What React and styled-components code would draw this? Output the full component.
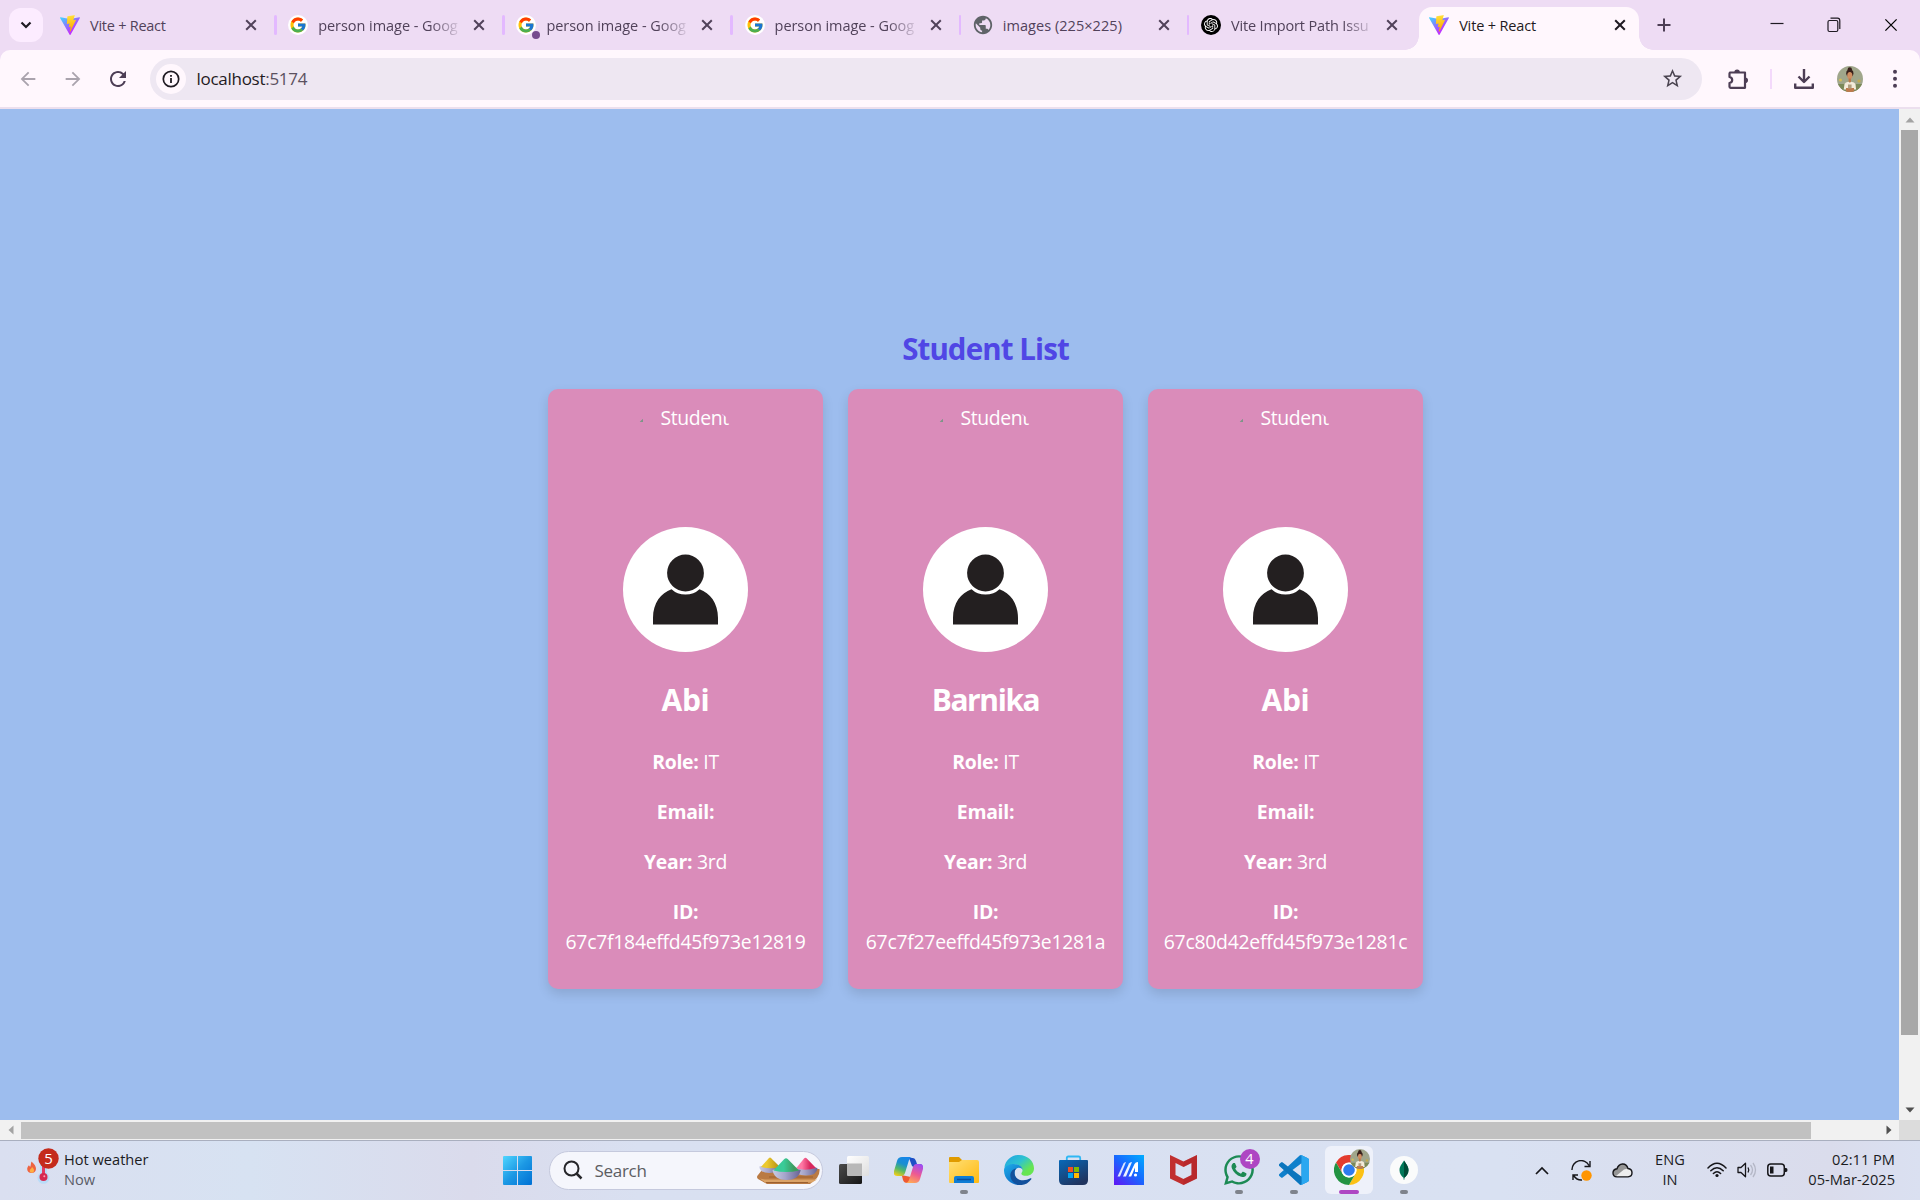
import React from 'react';
import styled, { createGlobalStyle, css } from 'styled-components';
import { FcGoogle } from 'react-icons/fc';
import { SiOpenai } from 'react-icons/si';
import { FaWhatsapp } from 'react-icons/fa';
import {
  MdArrowBack, MdArrowForward, MdRefresh, MdStarBorder, MdPublic,
} from 'react-icons/md';

const GlobalStyle = createGlobalStyle`
  * { box-sizing: border-box; }
  html, body { margin: 0; padding: 0; overflow: hidden; }
  body { font-family: "Open Sans", "Noto Sans", sans-serif; }
  svg { display: block; flex: none; }
`;

const Screen = styled.div`
  display: flex;
  flex-direction: column;
  width: 1920px;
  height: 1200px;
  overflow: hidden;
`;

/* ---------- Tab strip ---------- */

const TabStrip = styled.header`
  display: flex;
  height: 50px;
  background: #eedcf4;
`;

const TabSearch = styled.button`
  display: flex;
  align-items: center;
  justify-content: center;
  width: 34px;
  height: 34px;
  margin: 8px 7.5px 0 8.5px;
  padding: 0;
  border: 0;
  border-radius: 12px;
  background: #fcecff;
`;

const TabBox = styled.div`
  display: flex;
  align-items: center;
  flex: none;
  width: ${(p) => (p.$active ? 220 : 228.2)}px;
  height: ${(p) => (p.$active ? 43 : 50)}px;
  padding-left: 10px;
  color: ${(p) => (p.$active ? '#1f1a22' : '#51425a')};
  ${(p) => p.$active && css`
    position: relative;
    align-self: flex-end;
    padding-bottom: 7px;
    border-radius: 13px 13px 0 0;
    background: #fff7fd;
    &::before, &::after {
      content: '';
      position: absolute;
      bottom: 0;
      width: 14px;
      height: 14px;
    }
    &::before {
      right: 100%;
      background: radial-gradient(circle at 0 0, transparent 13.5px, #fff7fd 14px);
    }
    &::after {
      left: 100%;
      background: radial-gradient(circle at 100% 0, transparent 13.5px, #fff7fd 14px);
    }
  `}
`;

const Favicon = styled.span`
  position: relative;
  display: flex;
  align-items: center;
  justify-content: center;
  flex: none;
  width: 20px;
  height: 20px;
  margin-right: 10px;
  border-radius: 50%;
  background: ${(p) => p.$bg || 'transparent'};
`;

const ActivityDot = styled.i`
  position: absolute;
  right: -4px;
  bottom: -4px;
  width: 8px;
  height: 8px;
  border-radius: 50%;
  background: #764b8e;
`;

const TabTitle = styled.span`
  flex: none;
  width: 143px;
  padding-top: 1.5px;
  white-space: nowrap;
  font-size: 14.5px;
  line-height: 22px;
  letter-spacing: ${(p) => p.$spacing}px;
  ${(p) => p.$fade && css`
    mask-image: linear-gradient(90deg, #000 112px, transparent 145px);
  `}
`;

const TabClose = styled.span`
  display: flex;
  margin-left: 12px;
`;

const TabDivider = styled.i`
  width: 2.5px;
  height: 20px;
  margin-left: 17px;
  margin-top: -1px;
  border-radius: 2px;
  background: #e3b9ff;
`;

const NewTab = styled.span`
  display: flex;
  align-items: center;
  margin-left: 18px;
  height: 50px;
`;

const WindowControls = styled.div`
  display: flex;
  align-items: center;
  gap: 43px;
  height: 50px;
  margin-left: auto;
  padding-right: 22px;
`;

/* ---------- Toolbar ---------- */

const ToolbarBack = styled.div`
  height: 59px;
  background: #eedcf4;
`;

const Toolbar = styled.nav`
  display: flex;
  align-items: center;
  height: 59px;
  padding: 0 0 0 16px;
  border-bottom: 2px solid #ecdfee;
  border-radius: 10px 10px 0 0;
  background: #fff7fd;
  color: #4d3e55;
`;

const NavButton = styled.span`
  display: flex;
  justify-content: center;
  width: 24px;
  margin-right: ${(p) => p.$gap}px;
  color: ${(p) => (p.$muted ? '#aaa3ad' : '#4d3e55')};
`;

const AddressBar = styled.div`
  display: flex;
  align-items: center;
  flex: none;
  width: 1552px;
  height: 42px;
  padding: 0 18px 0 6px;
  border-radius: 21px;
  background: #eee7f2;
`;

const SiteInfo = styled.span`
  display: flex;
  align-items: center;
  justify-content: center;
  width: 30px;
  height: 30px;
  margin-right: 10.5px;
  border-radius: 50%;
  background: #fff7fd;
`;

const Url = styled.span`
  flex: 1;
  padding-top: 1px;
  font-size: 17px;
  line-height: 24px;
  letter-spacing: -0.28px;
  color: #1f1a22;
  span { color: #5b5160; }
`;

const ToolbarActions = styled.div`
  display: flex;
  align-items: center;
  margin-left: 24px;
`;

const ActionIcon = styled.span`
  display: flex;
  margin-left: ${(p) => p.$left || 0}px;
`;

const ActionDivider = styled.i`
  width: 2px;
  height: 20px;
  margin-left: 20px;
  background: #f3d9fb;
`;

/* ---------- Page with scrollbars ---------- */

const Viewport = styled.div`
  display: grid;
  grid-template: 1011px 20px / 1899px 21px;
  width: 1920px;
  height: 1031px;
`;

const Page = styled.main`
  overflow: hidden;
  background: #9dbdee;
`;

const PageContent = styled.div`
  display: flex;
  flex-direction: column;
  align-items: center;
  width: 1971px;
  padding-top: 217px;
`;

const Title = styled.h2`
  margin: 0 0 18px;
  font-size: 29.5px;
  font-weight: 700;
  line-height: 45px;
  letter-spacing: -0.9px;
  color: #5046e5;
`;

const CardGrid = styled.div`
  display: flex;
  gap: 25px;
`;

const Card = styled.article`
  display: flex;
  flex-direction: column;
  align-items: center;
  width: 275px;
  height: 600px;
  padding-top: 12.5px;
  border-radius: 10px;
  background: #da8cba;
  box-shadow: 0 5px 12px rgba(0, 0, 0, 0.12);
  color: #fff;
  font-size: 19.4px;
  line-height: 30px;
`;

const MissingPhoto = styled.div`
  display: flex;
  align-items: flex-start;
  width: 125px;
  height: 125px;
  overflow: hidden;
  border-radius: 50%;
  white-space: nowrap;
`;

const MissingIcon = styled.svg`
  width: 20px;
  height: 20px;
  margin-right: 17.5px;
`;

const MissingAlt = styled.span`
  padding-top: 1.5px;
  letter-spacing: -0.4px;
`;

const Avatar = styled.svg`
  width: 125px;
  height: 125px;
`;

const StudentName = styled.h2`
  margin: 25px 0;
  font-size: 30px;
  font-weight: 700;
  line-height: 45px;
  letter-spacing: ${(p) => p.$tracking}px;
`;

const Field = styled.p`
  margin: 0 0 20px;
  text-align: center;
  letter-spacing: -0.27px;
  span { display: ${(p) => (p.$stacked ? 'block' : 'inline')}; }
`;

const ScrollTrack = styled.div`
  display: flex;
  flex-direction: ${(p) => (p.$horizontal ? 'row' : 'column')};
  align-items: center;
  background: #f1f1f1;
`;

const ScrollArrow = styled.span`
  display: flex;
  align-items: center;
  justify-content: center;
  width: 21px;
  height: 21px;
  color: ${(p) => (p.$off ? '#a3a3a3' : '#505050')};
`;

const ScrollThumb = styled.div`
  width: ${(p) => p.$w}px;
  height: ${(p) => p.$h}px;
  margin-${(p) => (p.$w > p.$h ? 'right' : 'bottom')}: auto;
  background: ${(p) => p.$color};
`;

const ScrollCorner = styled.div`
  background: #dcdcdc;
`;

/* ---------- Taskbar ---------- */

const Taskbar = styled.footer`
  display: flex;
  align-items: center;
  height: 60px;
  padding-bottom: 1px;
  border-top: 1px solid #a9afbf;
  background: linear-gradient(90deg, #dadff0 0, #d7e2f2 250px, #dadbec 470px, #d9e0f1 640px, #d9e1f2 1500px, #dadcec 1830px, #dae0f1 1920px);
  color: #1c1c1f;
`;

const Weather = styled.div`
  display: flex;
  align-items: center;
  width: 503px;
  padding-left: 24px;
`;

const WeatherPicture = styled.span`
  display: flex;
  margin-bottom: 9px;
`;

const TaskText = styled.div`
  margin: 0 ${(p) => p.$right || 0}px 3px ${(p) => p.$left || 0}px;
  font-size: 14.6px;
  line-height: 20px;
  text-align: ${(p) => p.$align || 'left'};
  white-space: nowrap;
`;

const Muted = styled.div`
  color: #5a5d68;
`;

const SearchBox = styled.div`
  display: flex;
  align-items: center;
  width: 274px;
  height: 39px;
  margin: 0 3.5px 0 16.5px;
  padding: 0 2px 0 13px;
  border: 1px solid #c5c9dd;
  border-radius: 20px;
  background: #f5f6fc;
`;

const SearchText = styled.span`
  flex: 1;
  margin-left: 12px;
  font-size: 17px;
  letter-spacing: -0.3px;
  color: #5c5d62;
`;

const AppSlot = styled.div`
  display: flex;
  justify-content: center;
  width: 55px;
`;

const AppTile = styled.div`
  position: relative;
  display: flex;
  align-items: center;
  justify-content: center;
  width: 48px;
  height: 48px;
  border-radius: 6px;
  background: ${(p) => (p.$active ? '#eef1fa' : 'transparent')};
  &::after {
    content: '';
    display: ${(p) => (p.$running || p.$active ? 'block' : 'none')};
    position: absolute;
    bottom: 0;
    width: ${(p) => (p.$active ? 20 : 8)}px;
    height: 4px;
    border-radius: 2px;
    background: ${(p) => (p.$active ? '#ae46c3' : '#7f838c')};
  }
`;

const AppBadge = styled.span`
  position: absolute;
  top: 3px;
  right: 3px;
  width: 20px;
  height: 20px;
  border-radius: 50%;
  background: #ae46c3;
  color: #fff;
  font-size: 14.5px;
  line-height: 20px;
  text-align: center;
`;

const ProfileBadge = styled.span`
  position: absolute;
  top: 3px;
  right: 3px;
`;

const Tray = styled.div`
  display: flex;
  align-items: center;
  margin-left: auto;
  padding-right: 25px;
`;

const TrayIcon = styled.span`
  display: flex;
  margin-right: ${(p) => p.$gap}px;
`;

/* ---------- Drawings ---------- */

function ViteLogo() {
  return (
    <svg width="20" height="20" viewBox="0 0 256 257">
      <defs>
        <linearGradient id="viteBody" x1="0" y1="0.08" x2="0.58" y2="0.78">
          <stop offset="0" stopColor="#41D1FF" />
          <stop offset="1" stopColor="#BD34FE" />
        </linearGradient>
        <linearGradient id="viteBolt" x1="0.43" y1="0" x2="0.5" y2="0.9">
          <stop offset="0" stopColor="#FFEA83" />
          <stop offset="0.1" stopColor="#FFDD35" />
          <stop offset="1" stopColor="#FFA800" />
        </linearGradient>
      </defs>
      <path fill="url(#viteBody)" d="M255.153 37.938L134.897 252.976c-2.483 4.44-8.862 4.466-11.382.048L.875 37.958c-2.746-4.814 1.371-10.646 6.827-9.67l120.385 21.517a6.537 6.537 0 0 0 2.322-.004l117.867-21.483c5.438-.991 9.574 4.796 6.877 9.62Z" />
      <path fill="url(#viteBolt)" d="M185.432.063L96.44 17.501a3.268 3.268 0 0 0-2.634 3.014l-5.474 92.456a3.268 3.268 0 0 0 3.997 3.378l24.777-5.718c2.318-.535 4.413 1.507 3.936 3.838l-7.361 36.047c-.495 2.426 1.782 4.5 4.151 3.78l15.304-4.649c2.372-.72 4.652 1.36 4.15 3.788l-11.698 56.621c-.732 3.542 3.979 5.473 5.943 2.437l1.313-2.028l72.516-144.72c1.215-2.423-.88-5.186-3.54-4.672l-25.505 4.922c-2.396.462-4.435-1.77-3.759-4.114l16.646-57.705c.677-2.35-1.37-4.583-3.769-4.113Z" />
    </svg>
  );
}

function Cross({ size = 12, width = 2 }) {
  return (
    <svg width={size} height={size} viewBox="0 0 12 12">
      <path d="M1.2 1.2 10.8 10.8M10.8 1.2 1.2 10.8" stroke="currentColor" strokeWidth={width} />
    </svg>
  );
}

function PuzzleIcon() {
  return (
    <svg width="24" height="24" viewBox="0 0 24 24">
      <path d="M4 5.500h15v15.300H4.500q-1 0-1-1V16q2.700-.5 2.700-3t-2.700-3V6.500q0-1 1-1z" fill="none" stroke="currentColor" strokeWidth="2.200" strokeLinejoin="round" />
      <path d="M8.300 5.500a2.800 3 0 0 1 5.600 0zM19 10.400a3 2.800 0 0 1 0 5.600z" fill="currentColor" />
    </svg>
  );
}

function DownloadIcon() {
  return (
    <svg width="22" height="22" viewBox="0 0 22 22" fill="none" stroke="currentColor" strokeWidth="2.400">
      <path d="M11 1v12.500M5.500 8.500 11 14l5.500-5.500M2.200 15.500v4.300h17.600v-4.300" strokeLinejoin="round" />
    </svg>
  );
}

function DotsIcon() {
  return (
    <svg width="6" height="20" viewBox="0 0 6 20" fill="currentColor">
      <circle cx="3" cy="2.800" r="2" /><circle cx="3" cy="9.800" r="2" /><circle cx="3" cy="16.800" r="2" />
    </svg>
  );
}

function Portrait({ size, id }) {
  return (
    <svg width={size} height={size} viewBox="0 0 26 26">
      <clipPath id={id}><circle cx="13" cy="13" r="13" /></clipPath>
      <g clipPath={`url(#${id})`}>
        <rect width="26" height="26" fill="#a0a68b" />
        <circle cx="3.500" cy="14" r="1.500" fill="#d5bd58" />
        <circle cx="22" cy="15" r="1.600" fill="#c3ab4d" />
        <path d="M0 18h26v8H0z" fill="#7b8958" />
        <circle cx="12.800" cy="3.500" r="2.200" fill="#38201b" />
        <ellipse cx="12.800" cy="7.300" rx="3.600" ry="3.700" fill="#38201b" />
        <ellipse cx="12.800" cy="9.600" rx="2.600" ry="3.500" fill="#cf8e62" />
        <path d="M11.600 12.500h2.400v4h-2.400z" fill="#bd7949" />
        <path d="M7.500 18q1-2 3.800-2.300l1.500 1 1.500-1Q17.500 16 18.500 18l.6 5.500H6.700z" fill="#f3ead9" />
        <path d="M9 22h8v4H9z" fill="#c07a4d" />
        <path d="M11 18.500h3.600v4H11z" fill="#b09f80" />
      </g>
    </svg>
  );
}

function PersonPicture() {
  return (
    <Avatar viewBox="0 0 125 125">
      <circle cx="62.500" cy="62.500" r="62.500" fill="#fff" />
      <path d="M30 97.500V91C30 76 38 66 48.500 62.300Q54 67.500 62.500 67.500T76.500 62.300C87 66 95 76 95 91v6.500z" fill="#231f20" />
      <circle cx="62.500" cy="46" r="18.400" fill="#231f20" />
    </Avatar>
  );
}

function WeatherIcon() {
  return (
    <svg width="38" height="38" viewBox="0 0 38 38">
      <path d="M7.500 14.500c3 2.500 4.700 5 4.500 7.500-.2 2.800-2 4-4.300 4C5 26 3.200 24.500 3.200 22c0-1.700.8-2.800 1.800-3.800.5 1 .8 1.300 1.300 1.500.7-1.700.4-3.200 1.200-5.200z" fill="#ee6340" />
      <path d="M8 20c1.600 1.500 2.200 2.500 2 3.700-.2 1.500-1.200 2.100-2.300 2.100s-2-.8-2-2c0-1.600 1.800-1.800 2.300-3.800z" fill="#ffae42" />
      <path d="M16 15h7v11a6 6 0 1 1-7 0z" fill="#b9dcf8" />
      <path d="M18 16h3v12h-3z" fill="#e33b60" />
      <circle cx="19.500" cy="30" r="4" fill="#d52951" />
      <circle cx="20.300" cy="29.300" r="1" fill="#ff9fb2" />
      <circle cx="24.500" cy="11.500" r="10.200" fill="#c42b1c" />
      <text x="24.500" y="17" textAnchor="middle" fontSize="15" fill="#fff">5</text>
    </svg>
  );
}

function WindowsLogo() {
  return (
    <svg width="29" height="29" viewBox="0 0 29 29">
      <defs>
        <linearGradient id="win" x1="0" y1="0" x2="1" y2="1">
          <stop offset="0" stopColor="#50d6ff" />
          <stop offset="0.5" stopColor="#1c98e4" />
          <stop offset="1" stopColor="#0070d4" />
        </linearGradient>
      </defs>
      <path fill="url(#win)" d="M1 0h13v14H0V1a1 1 0 0 1 1-1zM15 0h13a1 1 0 0 1 1 1v13H15zM0 15h14v14H1a1 1 0 0 1-1-1zM15 15h14v13a1 1 0 0 1-1 1H15z" />
    </svg>
  );
}

function FestivalBowls() {
  return (
    <svg width="63" height="29" viewBox="0 0 63 29">
      <defs>
        <linearGradient id="bowl" x1="0" x2="1"><stop offset="0" stopColor="#c9cbe4" /><stop offset="0.45" stopColor="#a5a4ca" /><stop offset="1" stopColor="#666293" /></linearGradient>
        <linearGradient id="yellowP" x1="0" x2="1"><stop offset="0.3" stopColor="#ecc92e" /><stop offset="1" stopColor="#b38d12" /></linearGradient>
        <linearGradient id="greenP" x1="0" x2="1"><stop offset="0.4" stopColor="#39cb98" /><stop offset="0.8" stopColor="#3d9b5f" /></linearGradient>
        <linearGradient id="pinkP" x1="0" x2="1"><stop offset="0.3" stopColor="#ff77a4" /><stop offset="0.7" stopColor="#d8285f" /></linearGradient>
      </defs>
      <path d="M5 14 62.500 13q.5 5-2.500 9l-7 6H10L1 23q-2-2 0-4z" fill="#ba7a43" />
      <path d="M3 22.500q4 1 8 1h49l-5 3H8z" fill="#dba367" />
      <path d="M12 21h44M9 26.500h42" stroke="#9c6030" />
      <path d="M2.300 10.500q.5 6.500 10 6.500t11-6.500l-10-2z" fill="url(#bowl)" />
      <path d="M4 11 11.800 2.200q1.200-1.200 2.400 0L23 11q-9 2.500-19 0z" fill="url(#yellowP)" />
      <path d="M37 12q1 7.500 12 7.500T60.500 12l-11-2z" fill="url(#bowl)" />
      <path d="M39 12.500 47 2.500q1.400-1.500 2.800 0l9.200 9.500q-10 3-20 .5z" fill="url(#pinkP)" />
      <path d="M15.500 14q1.500 10 14 10t14.200-10l-14-3z" fill="url(#bowl)" />
      <path d="M16.500 14.500 27.300 3q1.700-1.500 3.400 0l11.300 11.500q-13 3-25.500 0z" fill="url(#greenP)" />
    </svg>
  );
}

function TaskViewIcon() {
  return (
    <svg width="30" height="28" viewBox="0 0 30 28">
      <defs>
        <linearGradient id="tvDark" x1="0" y1="0" x2="1" y2="1"><stop offset="0" stopColor="#4b4b4b" /><stop offset="1" stopColor="#161616" /></linearGradient>
        <linearGradient id="tvLight" x1="0" y1="0" x2="1" y2="1"><stop offset="0" stopColor="#fff" /><stop offset="1" stopColor="#dedede" /></linearGradient>
      </defs>
      <rect x="8" y="0" width="22" height="20" rx="1.500" fill="url(#tvLight)" />
      <rect x="0" y="8" width="23" height="20" rx="1.500" fill="url(#tvDark)" />
      <path d="M8 7.500h15v12.500H9q-1 0-1-1z" fill="#b8b8b8" />
    </svg>
  );
}

function CopilotIcon() {
  return (
    <svg width="29" height="26" viewBox="0 0 29 26">
      <defs>
        <linearGradient id="cpA" x1="0.600" y1="0" x2="0.200" y2="1"><stop offset="0" stopColor="#1786e8" /><stop offset="0.350" stopColor="#1a8fd0" /><stop offset="0.650" stopColor="#52b868" /><stop offset="1" stopColor="#f2ce17" /></linearGradient>
        <linearGradient id="cpB" x1="0.700" y1="0" x2="0.300" y2="1"><stop offset="0" stopColor="#a24cf0" /><stop offset="0.500" stopColor="#ee5a91" /><stop offset="1" stopColor="#ffaa55" /></linearGradient>
      </defs>
      <path d="M15 1h4q2 0 3 3l1 3h3q3 0 2 4h-7l-3-2z" fill="#1e4fc6" />
      <path d="M7 18H5q-2 1 3 1l1 4q1 3 4 3h3l1-6z" fill="#ee5a32" />
      <path d="M8 0h10q-2 0-3 3l-4 13q-1 3-4 3H3q-4 0-3-5l3-10q1-4 5-4z" fill="url(#cpA)" />
      <path d="M22 7h4q4 0 3 5l-3 10q-1 4-5 4H11q3 0 4-3l4-13q1-3 3-3z" fill="url(#cpB)" />
    </svg>
  );
}

function FolderIcon() {
  return (
    <svg width="30" height="28" viewBox="0 0 30 28">
      <defs><linearGradient id="folder" x1="0" y1="0" x2="1" y2="1"><stop offset="0" stopColor="#ffdf75" /><stop offset="1" stopColor="#ffb910" /></linearGradient></defs>
      <path d="M1 1h9l3 3h15v6H0V2q0-1 1-1z" fill="#e09b00" />
      <path d="M0 6h10l3-2h15q2 0 2 2v20q0 1-1 1H1q-1 0-1-1z" fill="url(#folder)" />
      <path d="M5 27v-5q0-2 2-2h16q2 0 2 2v5z" fill="#0f7dd5" />
      <path d="M8 23.500h14" stroke="#0a4f9e" strokeWidth="1.500" />
    </svg>
  );
}

function EdgeIcon() {
  return (
    <svg width="30" height="30" viewBox="0 0 256 256">
      <defs>
        <linearGradient id="edA" x1="0.200" y1="0" x2="0.900" y2="0.600"><stop offset="0" stopColor="#23a9e0" /><stop offset="0.500" stopColor="#2fc3d0" /><stop offset="1" stopColor="#67e552" /></linearGradient>
        <linearGradient id="edB" x1="0" y1="0.200" x2="0.600" y2="1"><stop offset="0" stopColor="#1ca4e4" /><stop offset="1" stopColor="#0c67c2" /></linearGradient>
      </defs>
      <path d="M3 110C12 40 66 0 128 0c76 0 128 56 128 112 0 40-30 65-66 65-26 0-42-9-42-18 0-8 10-10 10-30 0-25-25-49-62-49C55 80 15 95 3 110z" fill="url(#edA)" />
      <path d="M2 115C14 90 52 76 92 78c40 0 66 22 67 51-6-15-22-22-36-20-26 4-38 32-30 61 10 35 41 61 79 70-15 10-28 16-44 16C58 256-2 200 0 128z" fill="url(#edB)" />
      <path d="M108 113c-22 18-25 53-4 78 27 32 82 31 122 8 6-3 11 1 7 7-25 35-63 53-101 50-53-8-84-54-77-95 4-22 23-43 53-48z" fill="#12509c" />
    </svg>
  );
}

function StoreIcon() {
  return (
    <svg width="29" height="30" viewBox="0 0 29 30">
      <defs><linearGradient id="store" x1="0" y1="0" x2="0.600" y2="1"><stop offset="0" stopColor="#0869b9" /><stop offset="1" stopColor="#20345f" /></linearGradient></defs>
      <path d="M7.800 6V3q0-1.500 1.500-1.500h10.400q1.500 0 1.500 1.500v3" fill="none" stroke="#2fb7f4" strokeWidth="1.800" />
      <path d="M1 5h27q1 0 1 1v19q0 5-5 5H5q-5 0-5-5V6q0-1 1-1z" fill="url(#store)" />
      <path d="M9 12h5v5H9z" fill="#f25022" /><path d="M15 12h5v5h-5z" fill="#7fba00" />
      <path d="M9 18h5v5H9z" fill="#00a4ef" /><path d="M15 18h5v5h-5z" fill="#ffb900" />
    </svg>
  );
}

function MyAsusIcon() {
  return (
    <svg width="30" height="30" viewBox="0 0 30 30">
      <defs><linearGradient id="asus" x1="1" y1="0" x2="0.100" y2="1"><stop offset="0" stopColor="#00adff" /><stop offset="0.500" stopColor="#1769ff" /><stop offset="1" stopColor="#5b1bf5" /></linearGradient></defs>
      <path d="M0 0h30v30H0z" fill="url(#asus)" />
      <path d="M3.500 21.500 9.500 8.500q.7-1.500 2.500-1.500l-6 14.500z" fill="#dbe8ff" />
      <path d="M9 21.500 15 8.500q.7-1.500 3-1.500l-6 14.500z" fill="#eef4ff" />
      <path d="M14.500 21.500 20.500 9q1-2 3.500-2v10h-3v-4.500l-3.800 9z" fill="#fff" />
      <circle cx="21.500" cy="20" r="1.600" fill="#fff" />
    </svg>
  );
}

function McAfeeIcon() {
  return (
    <svg width="27" height="30" viewBox="0 0 27 30">
      <path d="M0 0 13.500 6.500 27 0v23.500L13.500 30 0 23.500zM5.500 8v12l8 4 8-4V8l-8 4z" fill="#c12f2f" fillRule="evenodd" />
      <path d="M27 0v23.500L13.500 30v-6l8-4V8l-8 4V6.500z" fill="#a82028" opacity=".35" />
    </svg>
  );
}

function VsCodeIcon() {
  return (
    <svg width="30" height="30" viewBox="0 0 100 100">
      <path fill="#0f80cc" d="M96.460 10.800 75.860.87a6.230 6.230 0 0 0-7.100 1.200L29.350 38.040 12.190 25.010a4.160 4.160 0 0 0-5.320.24L1.370 30.250a4.170 4.170 0 0 0 0 6.160L16.250 50 1.370 63.580a4.170 4.170 0 0 0 0 6.170l5.500 5a4.160 4.160 0 0 0 5.320.24l17.160-13.030 39.410 35.960a6.230 6.230 0 0 0 7.100 1.200l20.600-9.910A6.250 6.250 0 0 0 100 83.580V16.420a6.250 6.250 0 0 0-3.540-5.620zM75.020 72.700 45.110 50l29.910-22.700z" />
      <path fill="#2aa7f0" d="M75 1 96.460 10.800A6.250 6.250 0 0 1 100 16.420V83.580a6.250 6.250 0 0 1-3.540 5.620L75.860 99.100Q72 100 70 98q5 1 5-4V6q0-5-5-4 2-2 5-1z" />
      <path fill="#0768ab" d="M1.370 30.250 6.870 25.250a4.160 4.160 0 0 1 5.320-.24L29.350 38.040 45 50 75 72.700V94q0 4-5 4L16.250 50 1.370 36.410a4.170 4.170 0 0 1 0-6.160z" opacity=".45" />
    </svg>
  );
}

function ChromeIcon() {
  return (
    <svg width="30" height="30" viewBox="0 0 48 48">
      <circle cx="24" cy="24" r="24" fill="#fff" />
      <path d="M3.200 12A24 24 0 0 1 44.800 12H24a12 12 0 0 0-10.400 18z" fill="#e33b2e" />
      <path d="M44.800 12A24 24 0 0 1 24 48l10.400-18A12 12 0 0 0 24 12z" fill="#fbc116" />
      <path d="M24 48A24 24 0 0 1 3.200 12l10.400 18A12 12 0 0 0 34.400 30z" fill="#229342" />
      <circle cx="24" cy="24" r="11.800" fill="#fff" />
      <circle cx="24" cy="24" r="9.300" fill="#2e7bef" />
    </svg>
  );
}

function MongoIcon() {
  return (
    <svg width="28" height="28" viewBox="0 0 28 28">
      <circle cx="14" cy="14" r="14" fill="#fafbfb" />
      <path d="M14 4.500c1.500 3 4.500 5 4.500 9.800 0 3.700-2.200 6-4 7.500l-.2 2h-.6l-.2-2c-1.800-1.500-4-3.800-4-7.500 0-4.800 3-6.800 4.500-9.800z" fill="#00795a" />
      <path d="M14 4.500c1.500 3 4.500 5 4.500 9.800 0 3.700-2.200 6-4.500 7.500z" fill="#004b37" />
    </svg>
  );
}

function SyncIcon() {
  return (
    <svg width="21" height="21" viewBox="0 0 21 21" fill="none" stroke="#16161a" strokeWidth="1.400">
      <path d="M1 10A9 9 0 0 1 18 5.500M19 1v5.500h-5.500M11 20Q6 20.500 2.500 15.500M2 20v-5h5" />
      <circle cx="15.500" cy="15.500" r="5.200" fill="#ff9500" stroke="none" />
    </svg>
  );
}

function CloudIcon() {
  return (
    <svg width="21" height="15" viewBox="0 0 21 15">
      <path d="M5 13.900Q1 13.500 1 10t4-4.200Q6.500 1.200 10.500 1T16 5.500q4 .5 4 4.300t-4 4.100z" fill="#eee" />
      <path d="M1 10q0-3.500 4-4.200Q6.500 1.200 10.500 1T16 5.500L12 6.500 4 13Q1 12 1 10z" fill="#969696" />
      <path d="M5 13.900Q1 13.500 1 10t4-4.200Q6.500 1.200 10.500 1T16 5.500q4 .5 4 4.300t-4 4.100z" fill="none" stroke="#16161a" strokeWidth="1.400" />
    </svg>
  );
}

function WifiIcon() {
  return (
    <svg width="20" height="16" viewBox="0 0 20 16" fill="none" stroke="#16161a" strokeWidth="1.500" strokeLinecap="round">
      <path d="M1 6Q10-3.500 19 6M3.800 8.800q6.200-6.300 12.400 0M6.400 11.500q3.600-3.600 7.200 0" />
      <circle cx="10" cy="13.500" r="1.600" fill="#16161a" stroke="none" />
    </svg>
  );
}

function VolumeIcon() {
  return (
    <svg width="20" height="16" viewBox="0 0 20 16" fill="none" stroke="#16161a" strokeWidth="1.300" strokeLinejoin="round">
      <path d="M1 5.500h3L8.500 1.200v13.600L4 10.500H1zM11 5.500q1.600 2.500 0 5" />
      <path d="M13.500 3q4 5 0 10M16 1q5 7 0 14" stroke="#b4b7c6" />
    </svg>
  );
}

function BatteryIcon() {
  return (
    <svg width="21" height="14" viewBox="0 0 21 14">
      <rect x=".8" y="1" width="16.500" height="12" rx="3" fill="none" stroke="#16161a" strokeWidth="1.500" />
      <path d="M3 3.500h3.500v7H3zM18 5h1q1.500 0 1.500 2T19 9h-1z" fill="#16161a" />
    </svg>
  );
}

function Arrow({ dir }) {
  const turn = { up: 0, right: 90, down: 180, left: 270 }[dir];
  return (
    <svg width="10" height="10" viewBox="0 0 10 10">
      <path d="M.5 7.500 5 2.500l4.500 5z" fill="currentColor" transform={`rotate(${turn} 5 5)`} />
    </svg>
  );
}

/* ---------- Data ---------- */

const TABS = [
  { icon: 'vite', title: 'Vite + React', spacing: -0.25 },
  { icon: 'google', title: 'person image - Goog', spacing: -0.05, fade: true },
  { icon: 'google', title: 'person image - Goog', spacing: -0.05, fade: true, dot: true },
  { icon: 'google', title: 'person image - Goog', spacing: -0.05, fade: true },
  { icon: 'globe', title: 'images (225×225)', spacing: 0.05 },
  { icon: 'openai', title: 'Vite Import Path Issu', spacing: -0.15, fade: true },
  { icon: 'vite', title: 'Vite + React', spacing: -0.15, active: true },
];

const STUDENTS = [
  { name: 'Abi', role: 'IT', year: '3rd', id: '67c7f184effd45f973e12819', tracking: -0.3 },
  { name: 'Barnika', role: 'IT', year: '3rd', id: '67c7f27eeffd45f973e1281a', tracking: -1.4 },
  { name: 'Abi', role: 'IT', year: '3rd', id: '67c80d42effd45f973e1281c', tracking: -0.3 },
];

const APPS = [
  { name: 'task view', icon: <TaskViewIcon /> },
  { name: 'copilot', icon: <CopilotIcon /> },
  { name: 'files', icon: <FolderIcon />, running: true },
  { name: 'edge', icon: <EdgeIcon /> },
  { name: 'store', icon: <StoreIcon /> },
  { name: 'asus', icon: <MyAsusIcon /> },
  { name: 'mcafee', icon: <McAfeeIcon /> },
  { name: 'whatsapp', icon: <FaWhatsapp size={34} color="#1c8a54" />, running: true, badge: '4' },
  { name: 'code', icon: <VsCodeIcon />, running: true },
  { name: 'chrome', icon: <ChromeIcon />, active: true, profile: true },
  { name: 'mongo', icon: <MongoIcon />, running: true },
];

function TabIcon({ kind, dot }) {
  if (kind === 'vite') return <Favicon><ViteLogo /></Favicon>;
  if (kind === 'google') return <Favicon $bg="#fff"><FcGoogle size={18} />{dot && <ActivityDot />}</Favicon>;
  if (kind === 'globe') return <Favicon><MdPublic size={22} color="#5f6368" /></Favicon>;
  return <Favicon $bg="#000"><SiOpenai size={14} color="#fff" /></Favicon>;
}

function Tab({ tab, last }) {
  return (
    <TabBox $active={tab.active}>
      <TabIcon kind={tab.icon} dot={tab.dot} />
      <TabTitle $fade={tab.fade} $spacing={tab.spacing}>{tab.title}</TabTitle>
      <TabClose><Cross /></TabClose>
      {!last && !tab.active && <TabDivider />}
    </TabBox>
  );
}

function StudentCard({ student }) {
  return (
    <Card>
      <MissingPhoto>
        <MissingIcon viewBox="0 0 20 20"><path d="M15.500 20.500 20 16.500V20z" fill="#7d9588" /></MissingIcon>
        <MissingAlt>Student</MissingAlt>
      </MissingPhoto>
      <PersonPicture />
      <StudentName $tracking={student.tracking}>{student.name}</StudentName>
      <Field><strong>Role:</strong> {student.role}</Field>
      <Field><strong>Email:</strong></Field>
      <Field><strong>Year:</strong> {student.year}</Field>
      <Field $stacked><strong>ID:</strong><span>{student.id}</span></Field>
    </Card>
  );
}

export default function App() {
  return (
    <Screen>
      <GlobalStyle />
      <TabStrip>
        <TabSearch>
          <svg width="12" height="8" viewBox="0 0 12 8"><path d="m1.500 1.500 4.500 4.500 4.500-4.500" fill="none" stroke="#1f1a22" strokeWidth="2.200" /></svg>
        </TabSearch>
        {TABS.map((tab, i) => <Tab key={i} tab={tab} last={i >= 5} />)}
        <NewTab>
          <svg width="14" height="14" viewBox="0 0 14 14"><path d="M7 .5v13M.5 7h13" stroke="#4d3e55" strokeWidth="2" /></svg>
        </NewTab>
        <WindowControls>
          <svg width="14" height="14" viewBox="0 0 14 14"><path d="M.5 5.500h13" stroke="#1f1a22" strokeWidth="1.200" /></svg>
          <svg width="14" height="16" viewBox="0 0 14 16" fill="none" stroke="#1f1a22" strokeWidth="1.200"><rect x="1" y="3.500" width="9.800" height="11" rx="1.500" /><path d="M3.500 1.200h7q2.300 0 2.300 2.500V12" /></svg>
          <Cross size={14} width={1.1} />
        </WindowControls>
      </TabStrip>

      <ToolbarBack>
        <Toolbar>
          <NavButton $gap={21} $muted><MdArrowBack size={22} /></NavButton>
          <NavButton $gap={20.5} $muted><MdArrowForward size={22} /></NavButton>
          <NavButton $gap={20.5}><MdRefresh size={24} /></NavButton>
          <AddressBar>
            <SiteInfo>
              <svg width="18" height="18" viewBox="0 0 18 18"><circle cx="9" cy="9" r="7.700" fill="none" stroke="#1f1a22" strokeWidth="1.700" /><path d="M8.100 8h1.800v5H8.100zM8.100 5h1.800v1.800H8.100z" fill="#1f1a22" /></svg>
            </SiteInfo>
            <Url>localhost<span>:5174</span></Url>
            <MdStarBorder size={23} color="#4a4450" />
          </AddressBar>
          <ToolbarActions>
            <ActionIcon><PuzzleIcon /></ActionIcon>
            <ActionDivider />
            <ActionIcon $left={21}><DownloadIcon /></ActionIcon>
            <ActionIcon $left={21.5}><Portrait size={26} id="profileTop" /></ActionIcon>
            <ActionIcon $left={29}><DotsIcon /></ActionIcon>
          </ToolbarActions>
        </Toolbar>
      </ToolbarBack>

      <Viewport>
        <Page>
          <PageContent>
            <Title>Student List</Title>
            <CardGrid>
              {STUDENTS.map((s) => <StudentCard key={s.id} student={s} />)}
            </CardGrid>
          </PageContent>
        </Page>
        <ScrollTrack>
          <ScrollArrow $off><Arrow dir="up" /></ScrollArrow>
          <ScrollThumb $w={17} $h={905} $color="#a8a8a8" />
          <ScrollArrow><Arrow dir="down" /></ScrollArrow>
        </ScrollTrack>
        <ScrollTrack $horizontal>
          <ScrollArrow $off><Arrow dir="left" /></ScrollArrow>
          <ScrollThumb $w={1790} $h={17} $color="#c1c1c1" />
          <ScrollArrow><Arrow dir="right" /></ScrollArrow>
        </ScrollTrack>
        <ScrollCorner />
      </Viewport>

      <Taskbar>
        <Weather>
          <WeatherPicture><WeatherIcon /></WeatherPicture>
          <TaskText $left={2}>Hot weather<Muted>Now</Muted></TaskText>
        </Weather>
        <WindowsLogo />
        <SearchBox>
          <svg width="20" height="20" viewBox="0 0 20 20" fill="none" stroke="#26262a"><circle cx="8.500" cy="8.500" r="7" strokeWidth="2" /><path d="m13.500 13.500 5 5" strokeWidth="2.500" /></svg>
          <SearchText>Search</SearchText>
          <FestivalBowls />
        </SearchBox>
        {APPS.map((app) => (
          <AppSlot key={app.name}>
            <AppTile $running={app.running} $active={app.active}>
              {app.icon}
              {app.badge && <AppBadge>{app.badge}</AppBadge>}
              {app.profile && <ProfileBadge><Portrait size={20} id="profileBadge" /></ProfileBadge>}
            </AppTile>
          </AppSlot>
        ))}
        <Tray>
          <TrayIcon $gap={22}>
            <svg width="14" height="9" viewBox="0 0 14 9"><path d="m1 8 6-6 6 6" fill="none" stroke="#16161a" strokeWidth="1.700" /></svg>
          </TrayIcon>
          <TrayIcon $gap={19.5}><SyncIcon /></TrayIcon>
          <TrayIcon $gap={22.5}><CloudIcon /></TrayIcon>
          <TaskText $align="center" $right={22.5}>ENG<br />IN</TaskText>
          <TrayIcon $gap={10}><WifiIcon /></TrayIcon>
          <TrayIcon $gap={10}><VolumeIcon /></TrayIcon>
          <TrayIcon $gap={20}><BatteryIcon /></TrayIcon>
          <TaskText $align="right">02:11 PM<br />05-Mar-2025</TaskText>
        </Tray>
      </Taskbar>
    </Screen>
  );
}
